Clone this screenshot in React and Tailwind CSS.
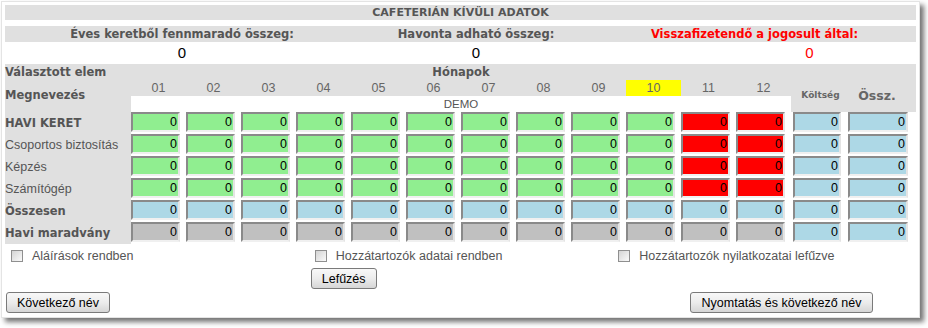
import React from 'react';

const GRAY = 'bg-[#e0e0e0]';
const months = ['01', '02', '03', '04', '05', '06', '07', '08', '09', '10', '11', '12'];

const colors = {
  green: 'bg-[#90ee90]',
  red: 'bg-[#ff0000]',
  blue: 'bg-[#add8e6]',
  silver: 'bg-[#c0c0c0]',
};

const rows = [
  { label: 'HAVI KERET', bold: true, kind: 'keret' },
  { label: 'Csoportos biztosítás', bold: false, kind: 'keret' },
  { label: 'Képzés', bold: false, kind: 'keret' },
  { label: 'Számítógép', bold: false, kind: 'keret' },
  { label: 'Összesen', bold: true, kind: 'total' },
  { label: 'Havi maradvány', bold: true, kind: 'rest' },
];

function monthColor(kind, i) {
  if (kind === 'total') return colors.blue;
  if (kind === 'rest') return colors.silver;
  return i >= 10 ? colors.red : colors.green;
}

function Cell({ color, width = 'w-[49px]' }) {
  return (
    <div
      className={`${width} h-[20px] ${color} border-2 border-t-[#8a8a8a] border-l-[#8a8a8a] border-r-[#e4e4e4] border-b-[#f0f0f0] text-right pr-[1px] text-[12.5px] leading-[16px] text-black`}
    >
      0
    </div>
  );
}

function Check({ label }) {
  return (
    <div className="flex items-center ml-[6px] mt-[6px] h-[12px]">
      <div className="w-[12px] h-[12px] border border-[#8f8f8f] bg-gradient-to-br from-[#d4d4d4] to-[#fafafa]" />
      <span className="ml-[9px] text-[12.5px] text-[#555]">{label}</span>
    </div>
  );
}

function Btn({ children, className = '' }) {
  return (
    <button
      className={`h-[21px] border border-[#7a7a7a] rounded-[3px] bg-gradient-to-b from-[#f8f8f8] via-[#ececec] to-[#d6d6d6] text-[12.5px] text-black leading-[18px] ${className}`}
    >
      {children}
    </button>
  );
}

export default function App() {
  const bold = { fontFamily: '"DejaVu Sans", Verdana, sans-serif' };
  return (
    <div
      className="w-[928px] h-[328px] bg-white pt-[1px] pl-[1px]"
      style={{ fontFamily: '"Liberation Sans", Arial, sans-serif' }}
    >
      <div className="w-[919px] h-[317px] border border-[#e4e4e4] bg-white px-[3px] pt-[3px] shadow-[4px_4px_5px_rgba(0,0,0,0.55)]">
        {/* Title */}
        <div className={`${GRAY} h-[15px] text-center text-[11px] font-bold text-[#555] leading-[15px]`} style={bold}>
          CAFETERIÁN KÍVÜLI ADATOK
        </div>

        {/* Summary */}
        <div className={`${GRAY} mt-[6px] h-[16px] flex text-[11.5px] font-bold leading-[16px]`} style={bold}>
          <div className="w-[354px] text-center text-[#555]">Éves keretből fennmaradó összeg:</div>
          <div className="w-[234px] text-center text-[#555]">Havonta adható összeg:</div>
          <div className="flex-1 text-center text-[#ff0000]">Visszafizetendő a jogosult által:</div>
        </div>
        <div className="h-[22px] flex text-[15px] leading-[22px]">
          <div className="w-[354px] text-center text-black">0</div>
          <div className="w-[234px] text-center text-black">0</div>
          <div className="flex-1 text-center text-[#ff0000] pl-[110px]">0</div>
        </div>

        {/* Table header */}
        <div className={`${GRAY} flex h-[48px]`}>
          <div className="w-[126px] flex flex-col text-[11.5px] font-bold text-[#555]" style={bold}>
            <div className="h-[16px] leading-[16px]">Választott elem</div>
            <div className="h-[32px] flex items-center">Megnevezés</div>
          </div>
          <div className="w-[660px] flex flex-col">
            <div className="h-[16px] leading-[16px] text-center text-[11.5px] font-bold text-[#555]" style={bold}>
              Hónapok
            </div>
            <div className="h-[16px] flex">
              {months.map((m) => (
                <div
                  key={m}
                  className={`w-[55px] text-center text-[12.5px] leading-[16px] text-[#666] ${m === '10' ? 'bg-[#ffff00]' : ''}`}
                >
                  {m}
                </div>
              ))}
            </div>
            <div className="h-[16px] bg-white text-center text-[11.5px] leading-[16px] text-[#555]">DEMO</div>
          </div>
          <div className="w-[55px] pt-[16px] flex items-center justify-center text-[9px] font-bold text-[#666]" style={bold}>
            <span className="pl-[4px]">Költség</span>
          </div>
          <div className="w-[62px] pt-[16px] flex items-center justify-center text-[12.5px] font-bold text-[#666]" style={bold}>
            Össz.
          </div>
        </div>

        {/* Rows */}
        {rows.map((r) => (
          <div key={r.label} className="flex h-[22px]">
            <div
              className={`w-[126px] ${GRAY} text-[#555] leading-[23px] ${r.bold ? 'font-bold text-[11.5px]' : 'text-[12.5px]'}`}
              style={r.bold ? bold : undefined}
            >
              {r.label}
            </div>
            {months.map((m, i) => (
              <div key={m} className="w-[55px]">
                <Cell color={monthColor(r.kind, i)} />
              </div>
            ))}
            <div className="w-[55px] pl-[2px]">
              <Cell color={colors.blue} width="w-[48px]" />
            </div>
            <div className="w-[62px] pl-[2px]">
              <Cell color={colors.blue} width="w-[60px]" />
            </div>
          </div>
        ))}

        {/* Checkboxes */}
        <div className="grid grid-cols-3">
          <div>
            <Check label="Aláírások rendben" />
          </div>
          <div className="flex flex-col items-start">
            <Check label="Hozzátartozók adatai rendben" />
            <Btn className="mt-[6px] ml-[2px] w-[66px]">Lefűzés</Btn>
          </div>
          <div>
            <Check label="Hozzátartozók nyilatkozatai lefűzve" />
          </div>
        </div>

        {/* Buttons */}
        <div className="flex mt-[3px]">
          <Btn className="ml-[1px] w-[104px]">Következő név</Btn>
          <Btn className="ml-auto mr-[43px] w-[183px]">Nyomtatás és következő név</Btn>
        </div>
      </div>
    </div>
  );
}
